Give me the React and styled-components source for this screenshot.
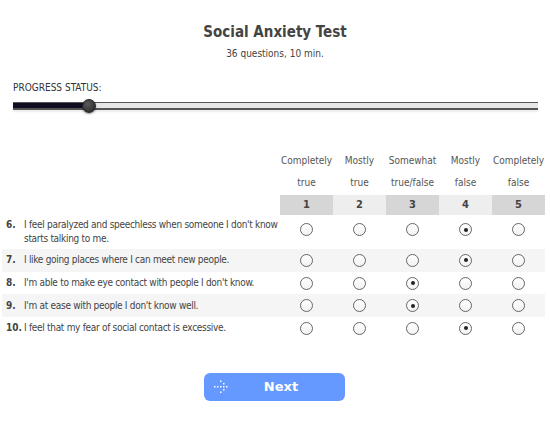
import React from 'react';
import styled, { createGlobalStyle } from 'styled-components';

const GlobalStyle = createGlobalStyle`
  body {
    margin: 0;
    background: #fff;
    font-family: 'DejaVu Sans Condensed', 'DejaVu Sans', sans-serif;
    color: #444;
  }
`;

const Page = styled.div`
  width: 550px;
  height: 422px;
  overflow: hidden;
  padding-top: 22px;
  box-sizing: border-box;
`;

const Header = styled.div`
  text-align: center;
  h1 {
    margin: 0;
    font-size: 15px;
    font-weight: bold;
    color: #444;
    line-height: 20px;
  }
  p {
    margin: 6px 0 0;
    font-size: 10px;
    color: #444;
  }
`;

const Progress = styled.div`
  padding: 0 12px 0 13px;
  margin-top: 23px;
`;

const ProgressLabel = styled.div`
  font-size: 10px;
  color: #333;
  margin-bottom: 9px;
`;

const Track = styled.div`
  position: relative;
  height: 5px;
  background: #e6e6e6;
  border-top: 1px solid #555;
  border-bottom: 2px solid #555;
  box-shadow: 0 2px 2px rgba(0, 0, 0, 0.08);
`;

const Fill = styled.div`
  height: 100%;
  background: #120d22;
`;

const Thumb = styled.div`
  position: absolute;
  top: 50%;
  width: 14px;
  height: 14px;
  margin: -7px 0 0 -7px;
  border-radius: 50%;
  background: radial-gradient(circle at 40% 35%, #5a5a5a, #333 70%);
  border: 1px solid #222;
  box-sizing: border-box;
  box-shadow: 0 1px 2px rgba(0, 0, 0, 0.4);
`;

const Table = styled.div`
  display: grid;
  grid-template-columns: 22px 256px repeat(5, 53px);
  margin: 40px 0 0 2px;
  font-size: 10px;
`;

const ColHead = styled.div`
  text-align: center;
  color: #555;
  line-height: 22px;
`;

const NumCell = styled.div`
  text-align: center;
  font-weight: bold;
  font-size: 11px;
  height: 20px;
  line-height: 20px;
  margin-top: 1px;
  color: #444;
  background: ${p => (p.$odd ? '#d6d6d6' : '#eeeeee')};
`;

const Row = styled.div`
  display: contents;
  & > div {
    background: ${p => (p.$shade ? '#f5f5f5' : '#fff')};
    min-height: 22.7px;
    padding: ${p => (p.$tall ? '3px 0 3px' : '0')};
    box-sizing: border-box;
  }
`;

const Num = styled.div`
  font-weight: bold;
  font-size: 10px;
  padding-left: 4px !important;
  display: flex;
  align-items: ${p => (p.$top ? 'flex-start' : 'center')};
  line-height: 14px;
  color: #444;
`;

const Text = styled.div`
  display: flex;
  align-items: ${p => (p.$top ? 'flex-start' : 'center')};
  line-height: 14px;
  letter-spacing: -0.3px;
  color: #444;
`;

const RadioCell = styled.div`
  display: flex;
  justify-content: center;
  align-items: ${p => (p.$top ? 'flex-start' : 'center')};
`;

const Radio = styled.span`
  width: 13px;
  height: 13px;
  border-radius: 50%;
  border: 1px solid #666;
  background: linear-gradient(#fff, #f2f2f2);
  box-sizing: border-box;
  display: flex;
  align-items: center;
  justify-content: center;
  margin-top: ${p => (p.$top ? '5px' : '0')};
  &::after {
    content: '';
    width: 4px;
    height: 4px;
    border-radius: 50%;
    background: ${p => (p.$checked ? '#222' : 'transparent')};
  }
`;

const Footer = styled.div`
  display: flex;
  padding-left: 204px;
  margin-top: 33px;
`;

const NextButton = styled.button`
  width: 141px;
  height: 28px;
  border: none;
  border-radius: 6px;
  background: #6699ff;
  color: #fff;
  font-family: 'DejaVu Sans', sans-serif;
  font-weight: bold;
  font-size: 13px;
  display: flex;
  align-items: center;
  padding: 0 0 0 9px;
  span {
    flex: 1;
    text-align: center;
    padding-right: 12px;
  }
`;

const headers = [
  ['Completely', 'true'],
  ['Mostly', 'true'],
  ['Somewhat', 'true/false'],
  ['Mostly', 'false'],
  ['Completely', 'false'],
];

const questions = [
  { n: 6, text: "I feel paralyzed and speechless when someone I don't know starts talking to me.", v: 4 },
  { n: 7, text: 'I like going places where I can meet new people.', v: 4 },
  { n: 8, text: "I'm able to make eye contact with people I don't know.", v: 3 },
  { n: 9, text: "I'm at ease with people I don't know well.", v: 3 },
  { n: 10, text: 'I feel that my fear of social contact is excessive.', v: 4 },
];

function DottedArrow() {
  return (
    <svg width="16" height="14" viewBox="0 0 16 14" fill="#fff">
      {[1, 4, 7, 10, 13].map(x => (
        <rect key={x} x={x} y="6" width="1.5" height="1.5" />
      ))}
      <rect x="10" y="3" width="1.5" height="1.5" />
      <rect x="10" y="9" width="1.5" height="1.5" />
      <rect x="7" y="0.5" width="1.5" height="1.5" />
      <rect x="7" y="11.5" width="1.5" height="1.5" />
    </svg>
  );
}

export default function App() {
  const progress = 76;
  return (
    <Page>
      <GlobalStyle />
      <Header>
        <h1>Social Anxiety Test</h1>
        <p>36 questions, 10 min.</p>
      </Header>
      <Progress>
        <ProgressLabel>PROGRESS STATUS:</ProgressLabel>
        <Track>
          <Fill style={{ width: progress + 'px' }} />
          <Thumb style={{ left: progress + 'px' }} />
        </Track>
      </Progress>
      <Table>
        <div />
        <div />
        {headers.map((h, i) => (
          <ColHead key={i}>
            {h[0]}
            <br />
            {h[1]}
          </ColHead>
        ))}
        <div />
        <div />
        {[1, 2, 3, 4, 5].map(n => (
          <NumCell key={n} $odd={n % 2 === 1}>{n}</NumCell>
        ))}
        {questions.map((q, i) => {
          const top = q.text.length > 60;
          return (
            <Row key={q.n} $shade={i % 2 === 1} $tall={top}>
              <Num $top={top}>{q.n}.</Num>
              <Text $top={top}>{q.text}</Text>
              {[1, 2, 3, 4, 5].map(c => (
                <RadioCell key={c} $top={top}>
                  <Radio $checked={q.v === c} $top={top} />
                </RadioCell>
              ))}
            </Row>
          );
        })}
      </Table>
      <Footer>
        <NextButton>
          <DottedArrow />
          <span>Next</span>
        </NextButton>
      </Footer>
    </Page>
  );
}
